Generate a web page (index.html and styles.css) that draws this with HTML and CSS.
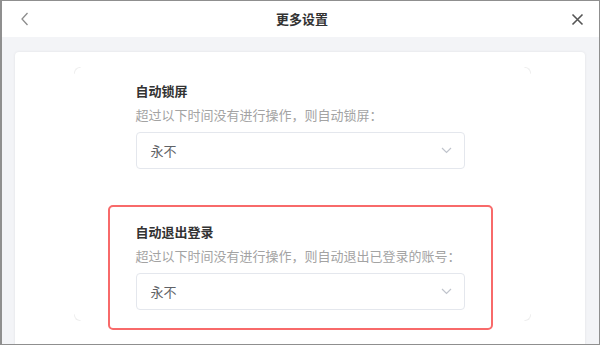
FILE: index.html
```html
<!DOCTYPE html>
<html lang="zh-CN">
<head>
<meta charset="utf-8">
<title>更多设置</title>
<link rel="stylesheet" href="styles.css">
</head>
<body>
<div class="window">
  <header class="header">
    <span class="back">
      <svg width="10" height="14" viewBox="0 0 10 14"><path d="M7.5 1 L2 7 L7.5 13" fill="none" stroke="#8c8c8c" stroke-width="1.3"/></svg>
    </span>
    <h1 class="title">更多设置</h1>
    <span class="close">
      <svg width="13" height="13" viewBox="0 0 13 13"><path d="M1.5 1.5 L11.5 11.5 M11.5 1.5 L1.5 11.5" fill="none" stroke="#555" stroke-width="1.6"/></svg>
    </span>
  </header>
  <main class="main">
    <div class="card">
      <span class="corner tl"></span><span class="corner tr"></span>
      <span class="corner bl"></span><span class="corner br"></span>
      <section class="section">
        <div class="sec-title">自动锁屏</div>
        <div class="sec-desc">超过以下时间没有进行操作，则自动锁屏：</div>
        <div class="select">
          <span>永不</span>
          <svg class="arrow" width="11" height="7" viewBox="0 0 11 7"><path d="M1 1 L5.5 5.5 L10 1" fill="none" stroke="#c0c4cc" stroke-width="1.2"/></svg>
        </div>
      </section>
      <section class="section active">
        <div class="sec-title">自动退出登录</div>
        <div class="sec-desc">超过以下时间没有进行操作，则自动退出已登录的账号：</div>
        <div class="select">
          <span>永不</span>
          <svg class="arrow" width="11" height="7" viewBox="0 0 11 7"><path d="M1 1 L5.5 5.5 L10 1" fill="none" stroke="#c0c4cc" stroke-width="1.2"/></svg>
        </div>
      </section>
    </div>
  </main>
</div>
</body>
</html>
```

FILE: styles.css
```css
html, body {
  margin: 0;
  padding: 0;
  width: 600px;
  height: 345px;
  overflow: hidden;
  font-family: "Noto Sans CJK SC", "Noto Sans", sans-serif;
}
.window {
  box-sizing: border-box;
  width: 600px;
  height: 345px;
  border: 1px solid #8f8f8f;
  border-left-width: 2px;
  display: flex;
  flex-direction: column;
  overflow: hidden;
  background: #f3f4f7;
}
.header {
  height: 36px;
  flex: none;
  background: #fff;
  display: flex;
  align-items: center;
  justify-content: space-between;
  padding: 0 15px 0 18px;
}
.back, .close {
  display: flex;
  align-items: center;
  width: 14px;
}
.close { justify-content: flex-end; }
.title {
  margin: 0;
  font-size: 13px;
  font-weight: bold;
  color: #333;
  line-height: 36px;
}
.main {
  flex: 1;
  padding: 15px 14px 0 13px;
  overflow: hidden;
}
.card {
  position: relative;
  background: #fff;
  border-radius: 4px;
  box-shadow: 0 0 3px rgba(0,0,0,0.08);
  height: 320px;
  padding-top: 12px;
  display: flex;
  flex-direction: column;
  align-items: center;
  gap: 16px;
  box-sizing: border-box;
}
.corner {
  position: absolute;
  width: 5px;
  height: 5px;
  border: 1px solid transparent;
}
.corner.tl { left: 59px; top: 15px; border-top-left-radius: 6px; border-top-color: #eeeeee; border-left-color: #eeeeee; }
.corner.tr { right: 54px; top: 15px; border-top-right-radius: 6px; border-top-color: #eeeeee; border-right-color: #eeeeee; }
.corner.bl { left: 59px; top: 262px; border-bottom-left-radius: 6px; border-bottom-color: #eeeeee; border-left-color: #eeeeee; }
.corner.br { right: 54px; top: 262px; border-bottom-right-radius: 6px; border-bottom-color: #eeeeee; border-right-color: #eeeeee; }
.section {
  width: 385px;
  box-sizing: border-box;
  border: 2px solid transparent;
  border-radius: 5px;
  padding: 15px 26px 18px 26px;
}
.section.active {
  border-color: #f86a6a;
}
.sec-title {
  font-size: 13px;
  font-weight: bold;
  color: #333;
  line-height: 20px;
}
.sec-desc {
  margin-top: 4px;
  font-size: 13px;
  color: #a3a3a3;
  line-height: 20px;
}
.select {
  margin-top: 7px;
  height: 37px;
  box-sizing: border-box;
  border: 1px solid #e4e7ed;
  border-radius: 4px;
  display: flex;
  align-items: center;
  justify-content: space-between;
  padding: 0 12px 0 14px;
  font-size: 13px;
  color: #606266;
}
.arrow { display: block; }
```
